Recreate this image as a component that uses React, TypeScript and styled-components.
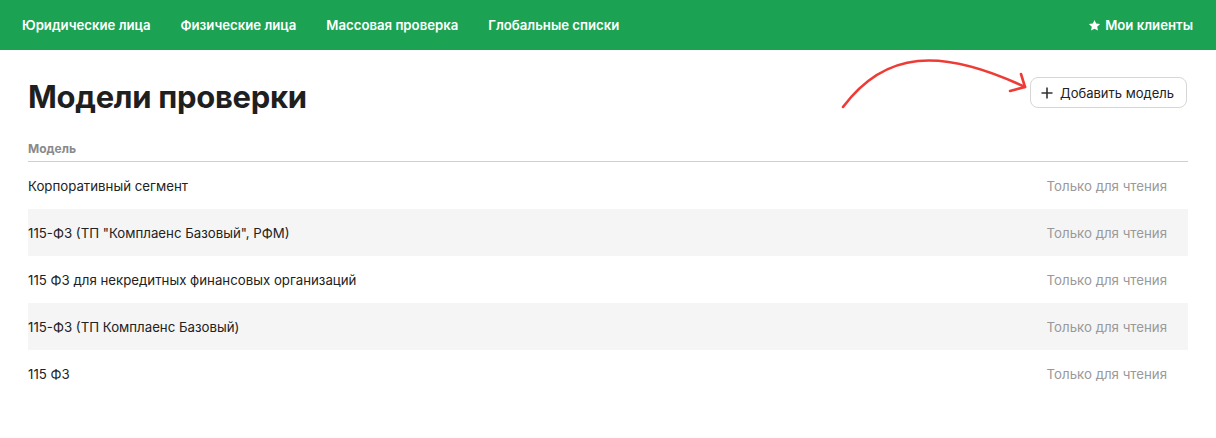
import React from 'react';
import styled, { createGlobalStyle } from 'styled-components';

const GlobalStyle = createGlobalStyle`
  body {
    margin: 0;
    background: #fff;
    font-family: Inter, 'Noto Sans', sans-serif;
    color: #222;
  }
`;

const TopBar = styled.nav`
  height: 50px;
  background: #1ba353;
  display: flex;
  align-items: center;
  padding: 0 23px 0 22px;
`;

const NavList = styled.div`
  display: flex;
  gap: 30px;
  flex: 1;
`;

const NavLink = styled.a`
  color: #fff;
  font-size: 13.2px;
  font-weight: 600;
  text-decoration: none;
`;

const Favorites = styled(NavLink)`
  display: flex;
  align-items: center;
  gap: 4px;
`;

const Main = styled.main`
  padding: 0 28px;
  position: relative;
`;

const TitleRow = styled.div`
  display: flex;
  align-items: flex-start;
  justify-content: space-between;
  height: 85px;
  padding-top: 27px;
  box-sizing: border-box;
`;

const Title = styled.h1`
  margin: 0;
  font-size: 31px;
  line-height: 40px;
  font-weight: 700;
  color: #1f1f1f;
  letter-spacing: -0.3px;
`;

const AddButton = styled.button`
  display: flex;
  align-items: center;
  gap: 6px;
  height: 31px;
  padding: 0 12px 0 9px;
  background: #fff;
  border: 1px solid #d6d6d6;
  border-radius: 8px;
  font-family: Inter, 'Noto Sans', sans-serif;
  font-size: 13px;
  color: #222;
  margin-right: 1px;
`;

const Arrow = styled.svg`
  position: absolute;
  left: 815px;
  top: 5px;
  pointer-events: none;
`;

const Table = styled.div`
  display: flex;
  flex-direction: column;
`;

const HeadCell = styled.div`
  font-size: 12px;
  font-weight: 700;
  color: #8a8a8a;
  height: 27px;
  display: flex;
  align-items: center;
  border-bottom: 1px solid #cfcfcf;
  box-sizing: border-box;
`;

const Row = styled.div<{ $striped: boolean }>`
  height: 47px;
  display: flex;
  align-items: center;
  justify-content: space-between;
  background: ${p => (p.$striped ? '#f5f5f5' : 'transparent')};
  font-size: 13.25px;
`;

const Name = styled.span`
  color: #222;
`;

const Access = styled.span`
  color: #999;
  padding-right: 21px;
`;

const models = [
  'Корпоративный сегмент',
  '115-ФЗ (ТП "Комплаенс Базовый", РФМ)',
  '115 ФЗ для некредитных финансовых организаций',
  '115-ФЗ (ТП Комплаенс Базовый)',
  '115 ФЗ',
];

export default function App() {
  return (
    <>
      <GlobalStyle />
      <TopBar>
        <NavList>
          <NavLink>Юридические лица</NavLink>
          <NavLink>Физические лица</NavLink>
          <NavLink>Массовая проверка</NavLink>
          <NavLink>Глобальные списки</NavLink>
        </NavList>
        <Favorites>
          <svg width="13" height="13" viewBox="0 0 24 24">
            <path
              fill="#fff"
              d="M12 1.8l3.1 6.6 7.2.9-5.3 5 1.4 7.1L12 17.9l-6.4 3.5 1.4-7.1-5.3-5 7.2-.9z"
            />
          </svg>
          Мои клиенты
        </Favorites>
      </TopBar>
      <Main>
        <Arrow width="220" height="60" viewBox="0 0 220 60">
          <path
            d="M28 52 C 70 -4, 125 -8, 210 32"
            fill="none"
            stroke="#ef3b36"
            strokeWidth="2.6"
            strokeLinecap="round"
          />
          <path
            d="M206 19 L210 32 L195 36"
            fill="none"
            stroke="#ef3b36"
            strokeWidth="2.6"
            strokeLinecap="round"
            strokeLinejoin="round"
          />
        </Arrow>
        <TitleRow>
          <Title>Модели проверки</Title>
          <AddButton>
            <svg width="14" height="14" viewBox="0 0 14 14">
              <path d="M7 1.5v11M1.5 7h11" stroke="#333" strokeWidth="1.6" />
            </svg>
            Добавить модель
          </AddButton>
        </TitleRow>
        <Table>
          <HeadCell>Модель</HeadCell>
          {models.map((m, i) => (
            <Row key={m} $striped={i % 2 === 1}>
              <Name>{m}</Name>
              <Access>Только для чтения</Access>
            </Row>
          ))}
        </Table>
      </Main>
    </>
  );
}
